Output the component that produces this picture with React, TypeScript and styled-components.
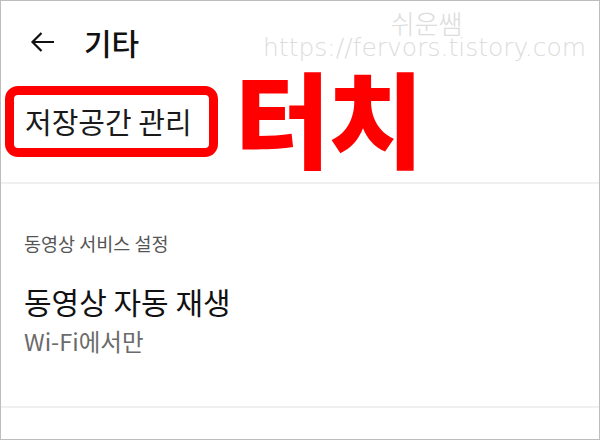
import React from "react";
import styled, { createGlobalStyle } from "styled-components";

const GlobalStyle = createGlobalStyle`
    html, body {
        margin: 0;
        padding: 0;
        background: #ffffff;
    }

    body {
        font-family: "Noto Sans CJK KR", "Noto Sans", sans-serif;
    }
`;

const Frame = styled.div`
    position: relative;
    width: 600px;
    height: 440px;
    box-sizing: border-box;
    border: 1px solid #bdbdbd;
    background: #ffffff;
    display: flex;
    flex-direction: column;
    overflow: hidden;
`;

const Header = styled.div`
    height: 70px;
    display: flex;
    align-items: center;
    padding: 12px 0 0 29px;
    column-gap: 29px;
    box-sizing: border-box;
`;

const BackButton = styled.div`
    width: 25px;
    height: 24px;
    display: flex;
    align-items: center;
    justify-content: center;
`;

const Title = styled.div`
    font-size: 30px;
    font-weight: 500;
    color: #111111;
    line-height: 1;
`;

const StorageRow = styled.div`
    height: 111px;
    display: flex;
    align-items: center;
    padding-left: 4px;
    column-gap: 17px;
    box-sizing: border-box;
`;

const Highlight = styled.div`
    height: 71px;
    box-sizing: border-box;
    border: 9px solid #ff0000;
    border-radius: 13px;
    display: flex;
    align-items: center;
    padding: 0 17px 0 11px;
    margin-top: -10px;
`;

const ItemLabel = styled.span`
    font-size: 29px;
    color: #1a1a1a;
    line-height: 1;
`;

const TouchLabel = styled.div`
    font-size: 104px;
    font-weight: 900;
    color: #ff0000;
    line-height: 0.86;
    margin-top: -22px;
    letter-spacing: -2px;
`;

const Divider = styled.div`
    height: 2px;
    background: #f0f0f0;
    flex-shrink: 0;
`;

const Section = styled.div`
    height: 222px;
    box-sizing: border-box;
    padding: 50px 0 0 23px;
    display: flex;
    flex-direction: column;
`;

const SectionCaption = styled.div`
    font-size: 18.5px;
    color: #555555;
    line-height: 1;
    margin-bottom: 33px;
`;

const SettingTitle = styled.div`
    font-size: 30px;
    color: #111111;
    line-height: 1;
    margin-bottom: 14px;
`;

const SettingValue = styled.div`
    font-size: 23.5px;
    color: #6b6b6b;
    line-height: 1;
`;

const Watermark = styled.div`
    position: absolute;
    top: 10px;
    left: 262px;
    display: flex;
    flex-direction: column;
    align-items: center;
    color: #dcdcdc;
    pointer-events: none;
`;

const WatermarkName = styled.div`
    font-size: 26px;
    font-weight: 300;
    line-height: 0.9;
    margin-left: 4px;
`;

const WatermarkUrl = styled.div`
    font-family: "DejaVu Sans", sans-serif;
    font-size: 25px;
    font-weight: 300;
    line-height: 1;
    margin-top: 1px;
`;

const BackArrow = () => (
    <svg width="25" height="24" viewBox="0 0 25 24" fill="none">
        <path
            d="M24 12H3M11.5 3L2.5 12L11.5 21"
            stroke="#111111"
            strokeWidth="2.2"
        />
    </svg>
);

export default function App() {
    return (
        <>
            <GlobalStyle />
            <Frame>
                <Header>
                    <BackButton>
                        <BackArrow />
                    </BackButton>
                    <Title>기타</Title>
                </Header>
                <StorageRow>
                    <Highlight>
                        <ItemLabel>저장공간 관리</ItemLabel>
                    </Highlight>
                    <TouchLabel>터치</TouchLabel>
                </StorageRow>
                <Divider />
                <Section>
                    <SectionCaption>동영상 서비스 설정</SectionCaption>
                    <SettingTitle>동영상 자동 재생</SettingTitle>
                    <SettingValue>Wi-Fi에서만</SettingValue>
                </Section>
                <Divider />
                <Watermark>
                    <WatermarkName>쉬운쌤</WatermarkName>
                    <WatermarkUrl>https://fervors.tistory.com</WatermarkUrl>
                </Watermark>
            </Frame>
        </>
    );
}
